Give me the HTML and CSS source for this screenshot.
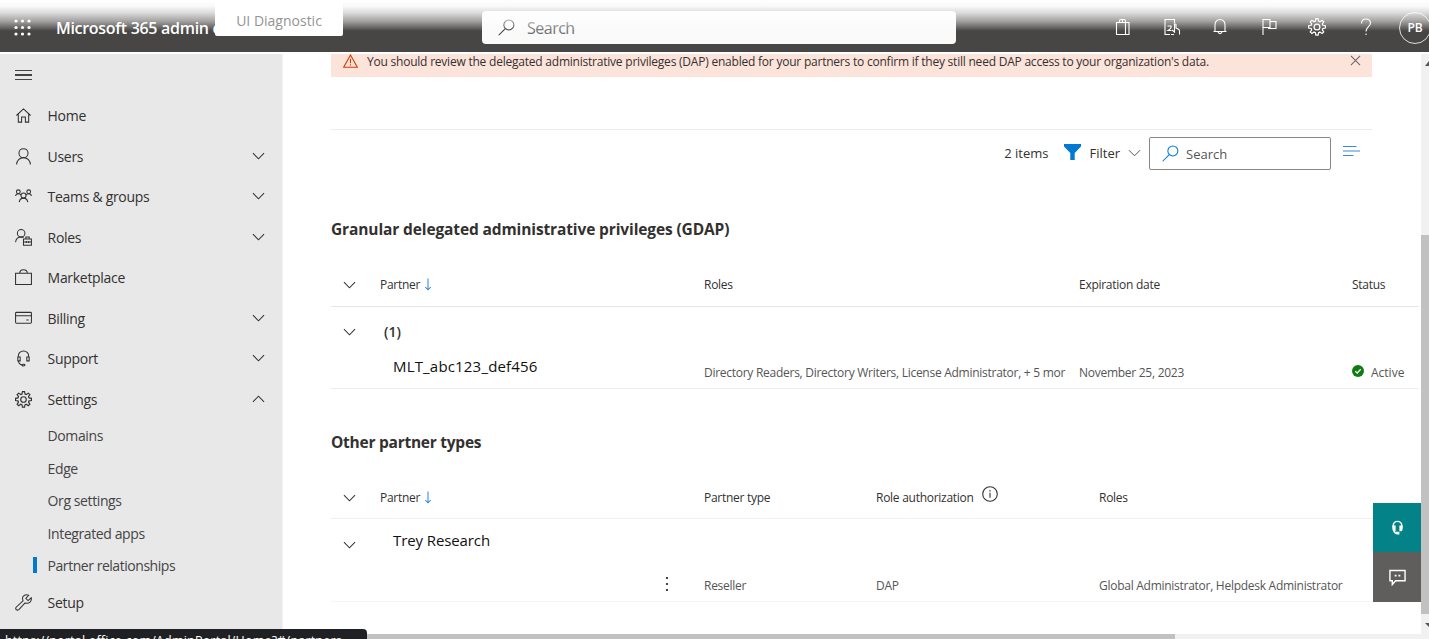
FILE: index.html
```html
<!DOCTYPE html>
<html lang="en">
<head>
<meta charset="utf-8">
<title>Microsoft 365 admin center</title>
<link rel="stylesheet" href="styles.css">
</head>
<body>
<svg class="defs" aria-hidden="true">
  <symbol id="down" viewBox="0 0 14 8"><path d="M1 1l6 6 6-6"/></symbol>
  <symbol id="gear" viewBox="1 1 16 16"><path d="M7.600 3.100L8 .9h2l.4 2.200 1.200.5 1.900-1.300 1.500 1.400-1.300 1.900.5 1.200 2.300.4v2l-2.300.4-.5 1.200 1.300 1.900-1.500 1.400-1.900-1.300-1.200.5-.4 2.200H8l-.4-2.200-1.200-.5-1.900 1.300L3 12.700l1.300-1.900-.5-1.200-2.300-.4v-2l2.300-.4.5-1.200L3 3.700l1.500-1.400 1.900 1.300z" transform="translate(0 .7)"/><circle cx="9" cy="9" r="2.600"/></symbol>
  <symbol id="lens" viewBox="0 0 18 18"><circle cx="11.500" cy="6.300" r="5.300"/><path d="M7.700 10.200L.7 17.200"/></symbol>
  <symbol id="sort" viewBox="0 0 8 14"><path d="M4 .5v12M1 9.700l3 3 3-3"/></symbol>
</svg>
<header class="header">
  <svg class="waffle" viewBox="0 0 17 17"><g><circle cx="2" cy="2" r="1.600"/><circle cx="8.500" cy="2" r="1.600"/><circle cx="15" cy="2" r="1.600"/><circle cx="2" cy="8.500" r="1.600"/><circle cx="8.500" cy="8.500" r="1.600"/><circle cx="15" cy="8.500" r="1.600"/><circle cx="2" cy="15" r="1.600"/><circle cx="8.500" cy="15" r="1.600"/><circle cx="15" cy="15" r="1.600"/></g></svg>
  <div class="brand">Microsoft 365 admin center</div>
  <div class="top-search"><svg viewBox="0 0 18 18"><use href="#lens"/></svg><span>Search</span></div>
  <div class="tools">
    <svg viewBox="0 0 18 18"><path d="M2.500 4.500h9v12h-9zM11.500 4.500h3.500v12h-3.500M5.500 4.500V3q0-1.500 1.500-1.500h3q1.500 0 1.500 1.500v1.500M8.500 4.500V2"/></svg>
    <svg viewBox="0 0 18 18"><path d="M7 16.500H2V1.500h9.500v4M4.500 8h3.500q1 2-3 4.500h3.500M8 16.500h3M9 12l2.500 2V6.500q.8-1 1.500 0V10l3 1.500q.5 1 .5 2v3"/></svg>
    <svg viewBox="0 0 18 18"><path d="M2.500 13.500h13M4 13.500V6.500a5 5 0 0 1 10 0v7M7 14q2 3.500 4 0"/></svg>
    <svg viewBox="0 0 18 18"><path d="M3 17V1.500h7v8H3M10 3.500h6v7H8.500v-1"/></svg>
    <svg viewBox="0 0 18 18"><use href="#gear"/></svg>
    <svg viewBox="0 0 18 18"><path d="M4.500 5.500C4.500-.5 13.500-.5 13.500 5.000 13.500 8.500 9 9 9 13.500M9 15.500V17"/></svg>
  </div>
  <div class="avatar">PB</div>
  <div class="fade"></div>
  <div class="tab">UI Diagnostic</div>
</header>
<div class="body">
  <nav class="nav">
    <div class="burger"><i></i><i></i><i></i></div>
    <div class="item"><svg viewBox="0 0 18 18"><path d="M1.500 9L9 2l7.500 7M3.500 7.500v8.500h3.500v-5.500h4V16h3.500V7.500"/></svg><span>Home</span></div>
    <div class="item"><svg viewBox="0 0 18 18"><circle cx="9" cy="5.500" r="4.800"/><path d="M1.700 17.500a7.300 7.300 0 0 1 14.600 0"/></svg><span>Users</span><svg class="chev" viewBox="0 0 14 8"><use href="#down"/></svg></div>
    <div class="item"><svg viewBox="0 0 18 18"><circle cx="3.500" cy="4" r="2"/><circle cx="14.500" cy="4" r="2"/><circle cx="9" cy="8" r="2.700"/><path d="M.6 8.500Q1 6 3.500 6q2 0 2.800 1.500M17.400 8.500Q17 6 14.500 6q-2 0-2.800 1.500M4.500 15q.5-4.300 4.500-4.300t4.500 4.300"/></svg><span>Teams &amp; groups</span><svg class="chev" viewBox="0 0 14 8"><use href="#down"/></svg></div>
    <div class="item"><svg viewBox="0 0 18 18"><circle cx="6.500" cy="4.500" r="4"/><path d="M.6 14q.5-5.500 6-5.500l2.500.6M9 10.500h8.400v6.700H9zM11.500 10.500v-2h3.500v2M9 13.700h8.400M12 12.700v2M14.500 12.700v2"/></svg><span>Roles</span><svg class="chev" viewBox="0 0 14 8"><use href="#down"/></svg></div>
    <div class="item"><svg viewBox="0 0 18 18"><path d="M.6 4.500h16.800v12H.6zM5 4.500Q5 .8 9 .8t4 3.700"/></svg><span>Marketplace</span></div>
    <div class="item"><svg viewBox="0 0 18 18"><rect x=".6" y="2.500" width="16.800" height="11.500" rx="1"/><path d="M.6 6h16.800M12 10.500h2.500"/></svg><span>Billing</span><svg class="chev" viewBox="0 0 14 8"><use href="#down"/></svg></div>
    <div class="item"><svg viewBox="0 0 18 18"><path d="M3.500 7.500V6.500a5.500 5.500 0 0 1 11 0v1M3 7.500h2.500v4H3zM12.500 7.500H15v4h-2.500zM3.800 11.500q0 4 4 4.500"/><ellipse cx="9" cy="16" rx="1.600" ry="1"/></svg><span>Support</span><svg class="chev" viewBox="0 0 14 8"><use href="#down"/></svg></div>
    <div class="item"><svg viewBox="0 0 18 18"><use href="#gear"/></svg><span>Settings</span><svg class="chev up" viewBox="0 0 14 8"><use href="#down"/></svg></div>
    <div class="sub">Domains</div>
    <div class="sub">Edge</div>
    <div class="sub">Org settings</div>
    <div class="sub">Integrated apps</div>
    <div class="sub current">Partner relationships</div>
    <div class="item"><svg viewBox="0 0 18 18"><path d="M14.500 1.200q-4-1.500-6 1.500-1 2 0 4.500L1.200 14q-1 1.700.3 2.700 1.300.9 2.600-.2l6.600-7q3 1 5.200-.8 2-2 1.300-4.700l-3.400 3-2.300-2.200z"/></svg><span>Setup</span></div>
  </nav>
  <main class="main">
    <div class="banner">
      <svg class="warn" viewBox="0 0 15 14"><path d="M7.500 1L14.300 13.200H.7zM7.500 4.800v4.500M7.500 10.300v1.300"/></svg>
      <span>You should review the delegated administrative privileges (DAP) enabled for your partners to confirm if they still need DAP access to your organization's data.</span>
      <svg class="close" viewBox="0 0 12 12"><path d="M1 1l10 10M11 1L1 11"/></svg>
    </div>
    <div class="toolbar">
      <span class="count">2 items</span>
      <svg class="funnel" viewBox="0 0 17 16"><path d="M0 0h17v2.500L10.700 9v7H6.300V9L0 2.500z"/></svg>
      <span class="filter">Filter</span>
      <svg class="chev small" viewBox="0 0 14 8"><use href="#down"/></svg>
      <div class="search"><svg viewBox="0 0 18 18"><use href="#lens"/></svg><span>Search</span></div>
      <svg class="lines" viewBox="0 0 17 12"><path d="M0 1.500h13.500M0 6h17M0 10.500h10.500"/></svg>
    </div>
    <h2 class="first">Granular delegated administrative privileges (GDAP)</h2>
    <section class="table gdap">
      <div class="row head"><svg class="chev" viewBox="0 0 14 8"><use href="#down"/></svg><div class="cell">Partner<svg class="sort" viewBox="0 0 8 14"><use href="#sort"/></svg></div><div class="cell">Roles</div><div class="cell wide">Expiration date</div><div class="cell">Status</div></div>
      <div class="row group"><svg class="chev" viewBox="0 0 14 8"><use href="#down"/></svg><div class="number">(1)</div></div>
      <div class="row data"><span></span><div class="name">MLT_abc123_def456</div><div class="cell roles">Directory Readers, Directory Writers, License Administrator, + 5 mor</div><div class="cell">November 25, 2023</div><div class="cell status"><svg viewBox="0 0 12 12"><circle cx="6" cy="6" r="6"/><path d="M3.300 6.200l1.900 1.800 3.500-3.700"/></svg>Active</div></div>
    </section>
    <h2>Other partner types</h2>
    <section class="table other">
      <div class="row head"><svg class="chev" viewBox="0 0 14 8"><use href="#down"/></svg><div class="cell">Partner<svg class="sort" viewBox="0 0 8 14"><use href="#sort"/></svg></div><div class="cell">Partner type</div><div class="cell auth">Role authorization<svg class="info" viewBox="0 0 16 16"><circle cx="8" cy="8" r="7.300"/><path d="M8 6.800v5M8 4v1.400"/></svg></div><div class="cell">Roles</div></div>
      <div class="row trey"><svg class="chev" viewBox="0 0 14 8"><use href="#down"/></svg><div class="name">Trey Research</div></div>
      <div class="row data"><span></span><div class="more"><i></i><i></i><i></i></div><div class="cell">Reseller</div><div class="cell dap">DAP</div><div class="cell glob">Global Administrator, Helpdesk Administrator</div></div>
    </section>
  </main>
</div>
<div class="vbar"><svg viewBox="0 0 8 16"><path d="M4 12l4-5v5z"/></svg><div class="vthumb"></div><svg viewBox="0 0 8 16"><path d="M4 5h4v4z"/></svg></div>
<div class="hbar"><div class="hthumb"></div></div>
<div class="float">
  <div class="help"><svg viewBox="0 0 16 18"><path d="M3.500 9V7a4.500 4.500 0 0 1 9 0v2M4 11.500q0 3.500 3.500 4" /><path class="solid" d="M2.500 7H6v6H4q-1.500-1-1.500-3zM10 7h3.500v3q0 2-1.500 3h-2zM6 13.500h4v3H7q-1-1-1-3z"/></svg></div>
  <div class="chat"><svg viewBox="0 0 18 18"><path d="M1 1.500h16v11H7l-3.500 4v-4H1z"/><path class="solid" d="M6 6h2v2H6zM10 6h2v2h-2z"/></svg></div>
</div>
<div class="statusbar">https://portal.office.com/AdminPortal/Home?#/partners</div>
</body>
</html>
```
FILE: styles.css
```css
* { box-sizing: border-box; }
body { margin: 0; height: 639px; overflow: hidden; position: relative; background: #fff; color: #323130; font-family: "Open Sans", "Noto Sans", sans-serif; font-size: 14px; white-space: nowrap; }
svg { fill: none; stroke: currentColor; stroke-width: 1.1; flex: none; display: block; }
.defs { position: absolute; width: 0; height: 0; }
.header { position: relative; height: 52px; background: #484644; color: #fff; display: flex; align-items: center; padding: 3px 0 0 14px; overflow: hidden; }
.header > * { flex-shrink: 0; }
.waffle { width: 17px; height: 17px; fill: #fff; stroke: none; margin-top: -1px; }
.brand { width: 426px; padding: 1px 0 0 25px; font-size: 16px; font-weight: 600; letter-spacing: -.3px; }
.top-search { width: 474px; height: 33px; margin-left: 25px; background: #fafafa; border-radius: 4px; display: flex; align-items: center; padding-left: 16px; gap: 12px; color: #707070; font-size: 16px; letter-spacing: -.5px; }
.top-search span { padding-top: 1px; }
.top-search svg { width: 17px; height: 17px; color: #333; }
.tools { margin: -1px 0 0 158px; display: flex; gap: 30.6px; }
.tools svg { width: 18px; height: 18px; }
.avatar { width: 32px; height: 32px; margin-left: 24px; border: 1px solid #ddd; border-radius: 50%; display: flex; align-items: center; justify-content: center; font-size: 12px; font-weight: 600; letter-spacing: -.2px; }
.tab { position: absolute; left: 215px; top: 0; width: 128px; height: 36px; background: #fff; color: #949494; border-radius: 0 0 2px 2px; text-align: center; line-height: 41px; font-size: 14px; }
.fade { position: absolute; left: 0; top: 0; right: 0; height: 31px; background: linear-gradient(#fff 0, rgba(255,255,255,.97) 20%, rgba(255,255,255,.8) 42%, rgba(255,255,255,.5) 68%, rgba(255,255,255,0)); }
.body { display: flex; height: 587px; padding-top: 2px; }
.nav { width: 283px; flex: none; background: #e8e8e8; border-right: 1px solid #f4f4f4; font-size: 14px; letter-spacing: -.3px; }
.burger { height: 42px; padding: 15.500px 0 0 15px; display: flex; flex-direction: column; gap: 3px; }
.burger i { width: 17px; height: 1.5px; background: #444; }
.item { height: 40.5px; display: flex; align-items: center; padding: 0 17.5px 0 15px; }
.item > svg:first-child { width: 17px; height: 17px; margin: -1px 15.6px 0 0; }
.item span { flex: 1; margin-top: -1px; }
.item .chev { margin-top: -2px; }
.chev { width: 13px; height: 8px; }
.up { transform: rotate(180deg); }
.sub { height: 32.5px; line-height: 32px; padding-left: 47.6px; color: #444; position: relative; letter-spacing: -.4px; }
.current { letter-spacing: -.46px; }
.current::before { content: ""; position: absolute; left: 33px; top: 7px; width: 4px; height: 16px; background: #0078d4; }
.main { flex: 1; min-width: 0; padding: 0 0 0 48px; }
.banner { width: 1041px; height: 22.500px; background: #fde4db; display: flex; align-items: flex-start; padding-left: 12px; font-size: 12px; line-height: 15px; letter-spacing: -.22px; }
.banner .warn { width: 15px; height: 14px; color: #d83b01; margin-right: 9px; }
.banner span { flex: 1; }
.banner .close { width: 11px; height: 11px; margin: 1px 11px 0 0; color: #666; }
.toolbar { margin-top: 52.500px; width: 1041px; height: 48px; border-top: 1px solid #ececec; display: flex; align-items: center; justify-content: flex-end; padding-right: 12px; font-size: 13px; }
.count { margin: -2px 16px 0 0; }
.funnel { width: 17px; height: 16px; fill: #0078d4; stroke: none; margin: -3px 8px 0 0; }
.filter { margin: -2px 8px 0 0; }
.small { width: 13px; margin: -2px 8px 0 0; stroke-width: .9; }
.search { width: 182px; height: 33px; border: 1px solid #8a8886; border-radius: 2px; display: flex; align-items: center; padding-left: 12px; gap: 7px; color: #555; margin-right: 12px; }
.search svg { width: 17px; height: 17px; color: #0078d4; }
.lines { width: 17px; height: 12px; color: #3b8ad8; margin-top: -5px; }
h2 { margin: 0; font-size: 15.5px; line-height: 24px; font-weight: 700; letter-spacing: -.12px; }
h2:not(.first) { letter-spacing: -.25px; }
.first { margin-top: 40px; }
.row { display: grid; grid-template-columns: 49px 324px 375px 273px 67px; align-items: center; border-bottom: 1px solid #e6e6e6; width: 1088px; }
.other .row { grid-template-columns: 49px 324px 172px 223px 320px; border-color: #f0f0f0; }
.row > .chev { margin-left: 12px; width: 13px; height: 8px; }
.gdap .head { margin-top: 22px; height: 44px; }
.cell { font-size: 12px; letter-spacing: -.27px; display: flex; align-items: center; }
.sort { width: 8px; height: 13px; color: #2b88d8; margin-left: 4px; }
.gdap .group { height: 50px; border: 0; }
.number { padding-left: 4px; margin-top: -2px; font-size: 14px; font-weight: 600; }
.name { padding-left: 13px; font-size: 15px; color: #111; }
.gdap .name { letter-spacing: .18px; }
.gdap .data { height: 32px; border-color: #eee; }
.gdap .data .name { margin-top: -14px; }
.data .cell { color: #555; }
.data .status { letter-spacing: 0; }
.status svg { width: 12px; height: 12px; fill: #107c10; stroke: none; margin: -3px 7px 0 0; }
.status path { fill: none; stroke: #fff; stroke-width: 1.300; }
.gdap + h2 { margin-top: 41px; }
.other .head { margin-top: 23px; height: 42px; }
.info { width: 16px; height: 16px; margin: -8px 0 0 8px; }
.other .trey { height: 52px; border: 0; }
.trey .name { margin-top: -10px; letter-spacing: -.1px; }
.other .data { height: 31px; border-color: #f6f6f6; }
.other .data .cell { margin-top: -1px; }
.more { justify-self: end; margin: -4px 36px 0 0; display: flex; flex-direction: column; gap: 4px; }
.more i { width: 2px; height: 2px; background: #444; }
.vbar { position: absolute; left: 1421px; top: 54px; width: 8px; height: 580px; background: #f1f1f1; display: flex; flex-direction: column; }
.vbar svg { width: 8px; height: 16px; fill: #555; stroke: none; }
.vthumb { height: 380px; margin: 165px 0 4px; background: #c1c1c1; }
.hbar { position: absolute; left: 283px; top: 634px; width: 1146px; height: 5px; background: #f1f1f1; }
.hthumb { width: 892px; height: 5px; background: #c1c1c1; }
.float { position: absolute; left: 1373px; top: 503px; width: 48px; color: #fff; }
.float > div { display: flex; align-items: center; justify-content: center; }
.help { height: 49px; background: #038387; }
.chat { height: 50px; background: #605e5c; }
.float svg { width: 17px; height: 17px; stroke-width: 1.500; }
.float .solid { fill: #fff; stroke: none; }
.statusbar { position: absolute; left: 0; top: 629px; width: 367px; height: 10px; background: #202124; border-radius: 0 4px 0 0; color: #fff; font-size: 12.5px; letter-spacing: .2px; line-height: 24px; padding-left: 5px; overflow: hidden; }
```
